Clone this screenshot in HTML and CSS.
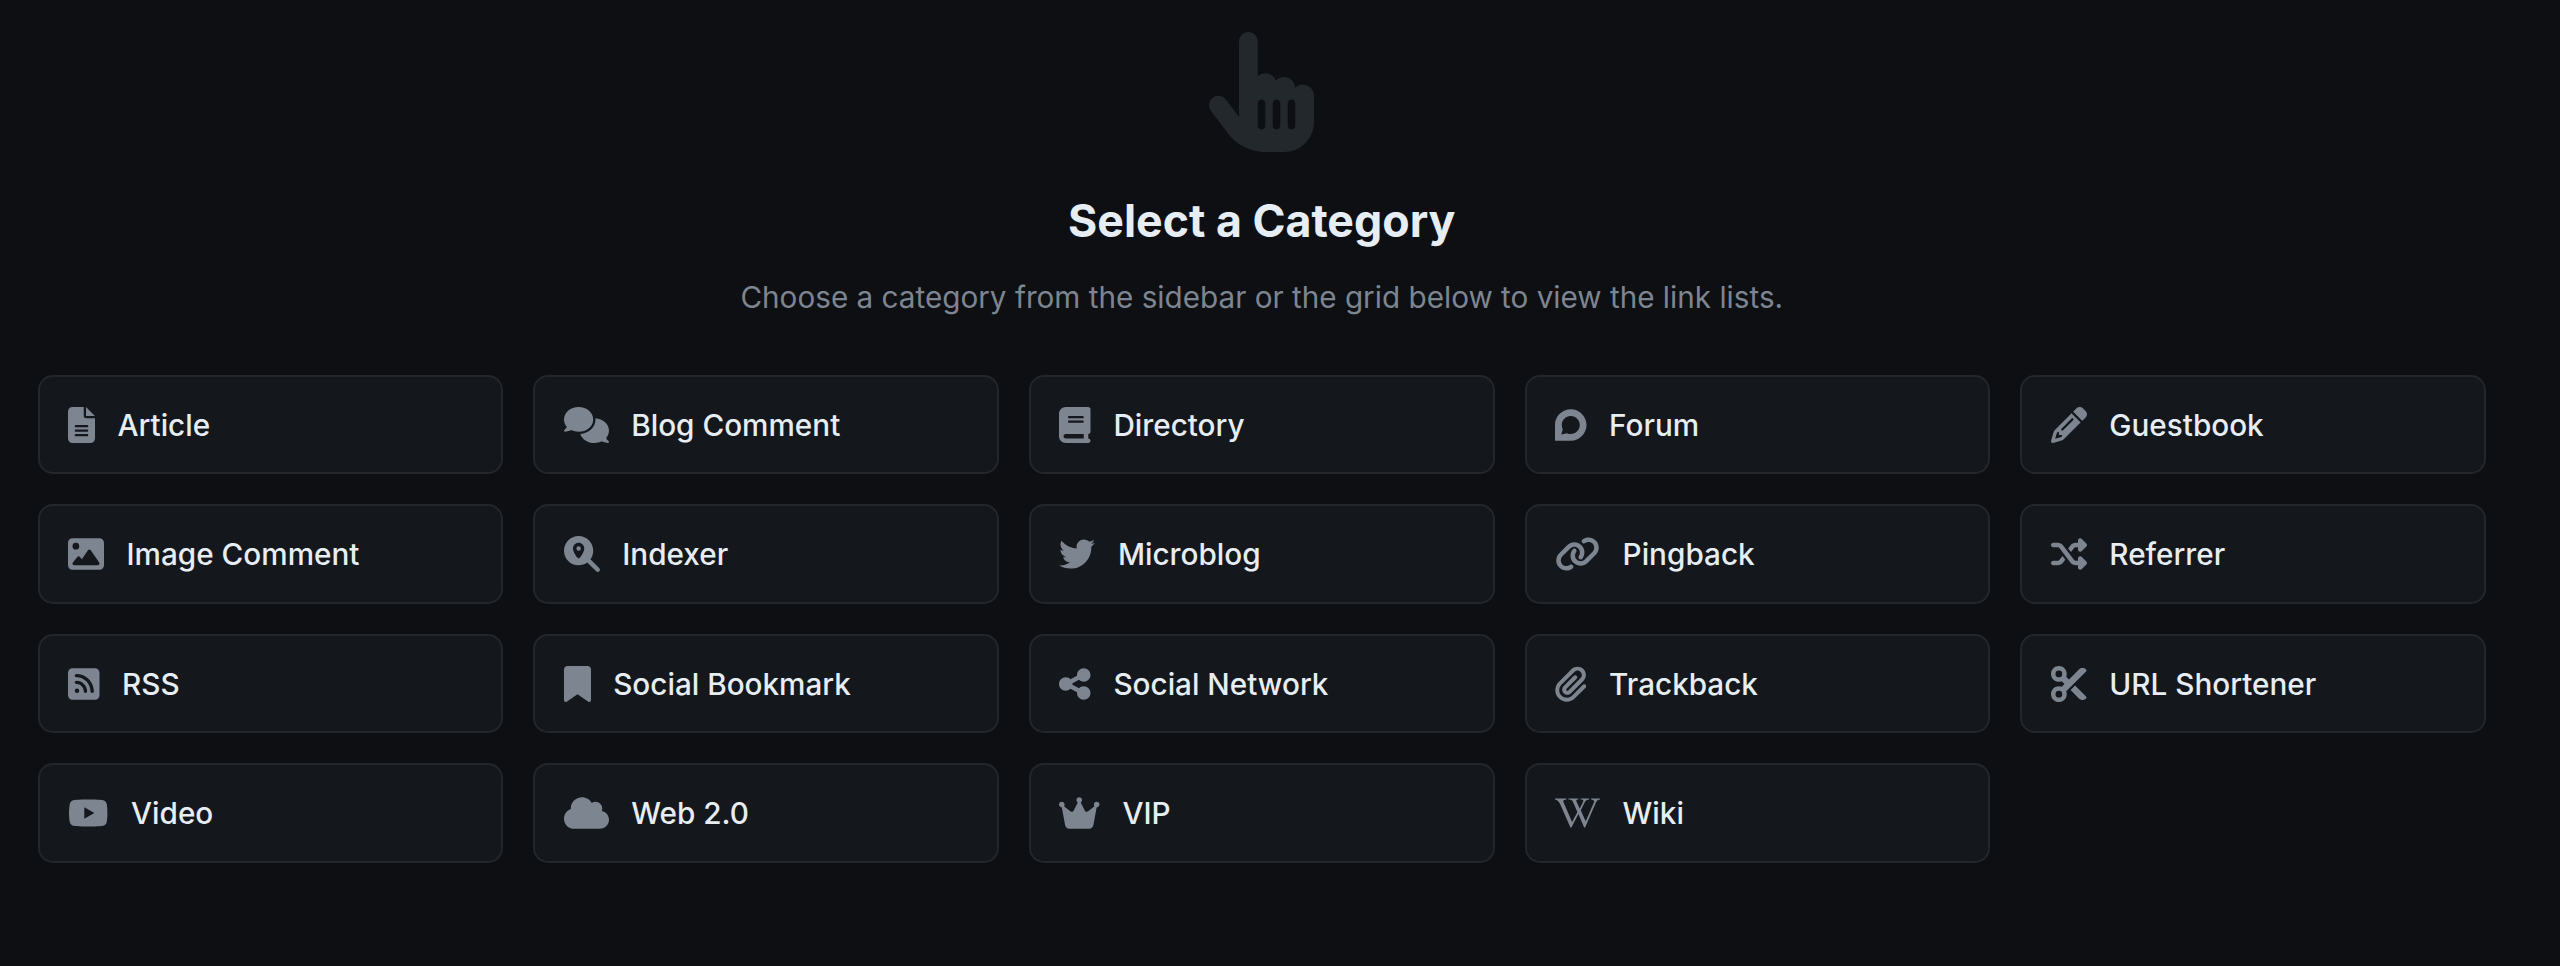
FILE: index.html
```html
<!DOCTYPE html>
<html lang="en">
<head>
<meta charset="utf-8">
<title>Select a Category</title>
<link rel="stylesheet" href="styles.css">
</head>
<body>
<main class="page">
  <section class="intro">
    <svg class="hand" viewBox="0 0 448 512"><path d="M128 40c0-22.1 17.9-40 40-40s40 17.900 40 40V188.200c8.500-7.600 19.700-12.200 32-12.200c20.600 0 38.200 13 45 31.200c8.800-9.300 21.200-15.200 35-15.200c25.300 0 46 19.500 47.900 44.300c8.500-7.700 19.800-12.300 32.100-12.300c26.500 0 48 21.500 48 48v48 16 48c0 70.700-57.300 128-128 128l-16 0H240l-.1 0h-5.200c-5 0-9.900-.3-14.700-1c-55.300-5.600-106.200-34-140-79L8 336c-13.300-17.700-9.700-42.700 8-56s42.700-9.700 56 8l56 74.700V40zM240 304c0-8.800-7.200-16-16-16s-16 7.200-16 16v96c0 8.800 7.200 16 16 16s16-7.200 16-16V304zm48-16c-8.800 0-16 7.200-16 16v96c0 8.800 7.200 16 16 16s16-7.200 16-16V304c0-8.800-7.200-16-16-16zm80 16c0-8.800-7.200-16-16-16s-16 7.200-16 16v96c0 8.800 7.200 16 16 16s16-7.200 16-16V304z"/></svg>
    <h1 class="title">Select a Category</h1>
    <p class="subtitle">Choose a category from the sidebar or the grid below to view the link lists.</p>
  </section>
  <section class="grid">
    <a class="card"><svg class="icon" viewBox="0 0 384 512"><path d="M64 0C28.700 0 0 28.700 0 64V448c0 35.300 28.700 64 64 64H320c35.300 0 64-28.700 64-64V160H256c-17.700 0-32-14.300-32-32V0H64zM256 0V128H384L256 0zM112 256H272c8.800 0 16 7.200 16 16s-7.200 16-16 16H112c-8.800 0-16-7.200-16-16s7.200-16 16-16zm0 64H272c8.800 0 16 7.200 16 16s-7.200 16-16 16H112c-8.800 0-16-7.200-16-16s7.200-16 16-16zm0 64H272c8.800 0 16 7.200 16 16s-7.200 16-16 16H112c-8.800 0-16-7.200-16-16s7.200-16 16-16z"/></svg><span>Article</span></a>
    <a class="card"><svg class="icon" viewBox="0 0 640 512"><path d="M208 352c114.900 0 208-78.800 208-176S322.900 0 208 0S0 78.800 0 176c0 38.600 14.700 74.300 39.600 103.400c-3.500 9.400-8.700 17.700-14.200 24.700c-4.800 6.200-9.700 11-13.300 14.300c-1.800 1.600-3.300 2.900-4.300 3.700c-.5 .4-.9 .7-1.100 .8l-.2 .2 0 0 0 0C1 327.200-1.400 334.400 .8 340.900S9.100 352 16 352c21.800 0 43.800-5.600 62.100-12.500c9.200-3.500 17.800-7.400 25.300-11.400C134.100 343.300 169.800 352 208 352zM448 176c0 112.300-99.100 196.900-216.500 207C255.800 457.400 336.400 512 432 512c38.200 0 73.900-8.700 104.700-23.900c7.500 4 16 7.900 25.200 11.400c18.300 6.900 40.300 12.500 62.100 12.500c6.900 0 13.100-4.500 15.200-11.100c2.100-6.600-.2-13.800-5.800-17.900l0 0 0 0-.2-.2c-.2-.2-.6-.4-1.100-.8c-1-.8-2.500-2-4.300-3.700c-3.600-3.300-8.500-8.100-13.300-14.300c-5.500-7-10.700-15.400-14.200-24.700c24.900-29 39.600-64.700 39.600-103.400c0-92.800-84.900-168.900-192.600-175.500c.4 5.100 .6 10.300 .6 15.500z"/></svg><span>Blog Comment</span></a>
    <a class="card"><svg class="icon" viewBox="0 0 448 512"><path d="M96 0C43 0 0 43 0 96V416c0 53 43 96 96 96H384h32c17.700 0 32-14.300 32-32s-14.300-32-32-32V384c17.700 0 32-14.300 32-32V32c0-17.700-14.300-32-32-32H384 96zm0 384H352v64H96c-17.700 0-32-14.300-32-32s14.300-32 32-32zm32-240c0-8.800 7.200-16 16-16H336c8.800 0 16 7.200 16 16s-7.200 16-16 16H144c-8.800 0-16-7.200-16-16zm16 48H336c8.800 0 16 7.200 16 16s-7.200 16-16 16H144c-8.800 0-16-7.200-16-16s7.200-16 16-16z"/></svg><span>Directory</span></a>
    <a class="card"><svg class="icon" viewBox="0 0 448 512"><path d="M225.900 32C103.300 32 0 130.500 0 252.100 0 256 .1 480 .1 480l225.800-.2c122.700 0 222.100-102.300 222.100-223.900C448 134.300 348.600 32 225.900 32zM224 384c-19.400 0-37.900-4.300-54.400-12.100L88.500 392l22.900-75c-9.800-18.100-15.400-38.900-15.400-61 0-70.700 57.300-128 128-128s128 57.300 128 128-57.300 128-128 128z"/></svg><span>Forum</span></a>
    <a class="card"><svg class="icon" viewBox="0 0 512 512"><path d="M410.300 231l11.300-11.300-33.900-33.900-62.100-62.100L291.700 89.800l-11.300 11.300-22.600 22.600L58.600 322.900c-10.400 10.400-18 23.300-22.200 37.400L1 480.700c-2.500 8.400-.2 17.500 6.100 23.700s15.300 8.500 23.700 6.100l120.300-35.400c14.100-4.200 27-11.800 37.400-22.200L387.700 253.700 410.300 231zM160 399.400l-9.100 22.700c-4 3.100-8.500 5.400-13.300 6.900L59.400 452l23-78.100c1.400-4.900 3.800-9.400 6.900-13.300l22.700-9.100v32c0 8.800 7.200 16 16 16h32zM362.700 18.700L348.300 33.200 325.700 55.800 314.300 67.100l33.900 33.900 62.100 62.100 33.900 33.900 11.300-11.300 22.600-22.600 14.500-14.500c25-25 25-65.500 0-90.500L453.300 18.700c-25-25-65.500-25-90.500 0zm-47.400 168l-144 144c-6.200 6.200-16.400 6.200-22.600 0s-6.200-16.400 0-22.600l144-144c6.200-6.200 16.400-6.200 22.600 0s6.200 16.400 0 22.600z"/></svg><span>Guestbook</span></a>
    <a class="card"><svg class="icon" viewBox="0 0 512 512"><path d="M0 96C0 60.700 28.700 32 64 32H448c35.300 0 64 28.700 64 64V416c0 35.300-28.700 64-64 64H64c-35.300 0-64-28.700-64-64V96zM323.800 202.500c-4.500-6.600-11.900-10.500-19.800-10.500s-15.400 3.900-19.800 10.500l-87 127.600L170.700 297c-4.600-5.700-11.500-9-18.700-9s-14.200 3.300-18.700 9l-64 80c-5.800 7.200-6.900 17.100-2.900 25.400s12.400 13.600 21.600 13.600h96 32H424c8.900 0 17.100-4.900 21.200-12.800s3.600-17.400-1.400-24.700l-120-176zM112 192a48 48 0 1 0 0-96 48 48 0 1 0 0 96z"/></svg><span>Image Comment</span></a>
    <a class="card"><svg class="icon" viewBox="0 0 512 512"><path d="M416 208c0 45.900-14.900 88.300-40 122.700L502.600 457.400c12.500 12.500 12.500 32.800 0 45.300s-32.800 12.500-45.300 0L330.700 376c-34.400 25.200-76.800 40-122.700 40C93.100 416 0 322.900 0 208S93.100 0 208 0S416 93.100 416 208zM288 176c0-44.200-35.800-80-80-80s-80 35.800-80 80c0 48.800 46.500 111.600 68.600 138.600c6 7.300 16.800 7.300 22.700 0c22.100-27 68.600-89.800 68.600-138.600zm-112 0a32 32 0 1 1 64 0 32 32 0 1 1 -64 0z"/></svg><span>Indexer</span></a>
    <a class="card"><svg class="icon" viewBox="0 0 512 512"><path d="M459.370 151.716c.325 4.548.325 9.097.325 13.645 0 138.720-105.583 298.558-298.558 298.558-59.452 0-114.680-17.219-161.137-47.106 8.447.974 16.568 1.299 25.340 1.299 49.055 0 94.213-16.568 130.274-44.832-46.132-.975-84.792-31.188-98.112-72.772 6.498.974 12.995 1.624 19.818 1.624 9.421 0 18.843-1.300 27.614-3.573-48.081-9.747-84.143-51.980-84.143-102.985v-1.299c13.969 7.797 30.214 12.670 47.431 13.319-28.264-18.843-46.781-51.005-46.781-87.391 0-19.492 5.197-37.360 14.294-52.954 51.655 63.675 129.300 105.258 216.365 109.807-1.624-7.797-2.599-15.918-2.599-24.040 0-57.828 46.782-104.934 104.934-104.934 30.213 0 57.502 12.670 76.670 33.137 23.715-4.548 46.456-13.320 66.599-25.340-7.798 24.366-24.366 44.833-46.132 57.827 21.117-2.273 41.584-8.122 60.426-16.243-14.292 20.791-32.161 39.308-52.628 54.253z"/></svg><span>Microblog</span></a>
    <a class="card"><svg class="icon" viewBox="0 0 640 512"><path d="M579.800 267.700c56.500-56.500 56.500-148 0-204.500c-50-50-128.800-56.500-186.300-15.400l-1.600 1.100c-14.400 10.300-17.700 30.300-7.400 44.600s30.300 17.700 44.600 7.400l1.600-1.100c32.100-22.900 76-19.300 103.800 8.600c31.500 31.500 31.500 82.500 0 114L422.300 334.800c-31.500 31.500-82.500 31.500-114 0c-27.900-27.900-31.500-71.800-8.600-103.800l1.100-1.600c10.300-14.400 6.900-34.400-7.400-44.600s-34.400-6.900-44.600 7.400l-1.100 1.600C206.500 251.200 213 330 263 380c56.500 56.500 148 56.500 204.500 0L579.800 267.700zM60.200 244.300c-56.500 56.500-56.500 148 0 204.500c50 50 128.800 56.500 186.300 15.400l1.600-1.100c14.400-10.300 17.700-30.300 7.400-44.600s-30.300-17.700-44.600-7.400l-1.600 1.100c-32.100 22.900-76 19.300-103.800-8.600C74 372 74 321 105.500 289.500L217.700 177.200c31.500-31.500 82.500-31.500 114 0c27.900 27.900 31.500 71.800 8.600 103.900l-1.100 1.600c-10.300 14.400-6.900 34.400 7.400 44.600s34.400 6.900 44.600-7.400l1.100-1.600C433.500 260.800 427 182 377 132c-56.500-56.500-148-56.500-204.500 0L60.200 244.300z"/></svg><span>Pingback</span></a>
    <a class="card"><svg class="icon" viewBox="0 0 512 512"><path d="M403.800 34.400c12-5 25.700-2.200 34.900 6.900l64 64c6 6 9.400 14.100 9.400 22.600s-3.400 16.600-9.400 22.600l-64 64c-9.200 9.200-22.900 11.900-34.900 6.900s-19.800-16.600-19.800-29.600V160H352c-10.100 0-19.600 4.700-25.600 12.800L284 229.300 244 176l31.200-41.600C293.300 110.200 321.800 96 352 96h32V64c0-12.900 7.800-24.600 19.800-29.600zM164 282.700L204 336l-31.200 41.600C154.700 401.800 126.200 416 96 416H32c-17.700 0-32-14.300-32-32s14.300-32 32-32H96c10.100 0 19.600-4.700 25.600-12.800L164 282.700zm274.600 188c-9.200 9.200-22.900 11.900-34.900 6.900s-19.800-16.600-19.800-29.600V416H352c-30.200 0-58.700-14.200-76.800-38.400L121.600 172.800c-6-8.100-15.500-12.800-25.600-12.800H32c-17.700 0-32-14.300-32-32s14.300-32 32-32H96c30.200 0 58.700 14.200 76.800 38.400L326.400 339.200c6 8.100 15.500 12.800 25.600 12.800h32V320c0-12.900 7.800-24.600 19.800-29.600s25.700-2.200 34.900 6.900l64 64c6 6 9.400 14.100 9.400 22.600s-3.400 16.600-9.400 22.600l-64 64z"/></svg><span>Referrer</span></a>
    <a class="card"><svg class="icon" viewBox="0 0 448 512"><path d="M64 32C28.700 32 0 60.700 0 96V416c0 35.300 28.700 64 64 64H384c35.300 0 64-28.700 64-64V96c0-35.300-28.700-64-64-64H64zM96 136c0-13.300 10.700-24 24-24c137 0 248 111 248 248c0 13.300-10.700 24-24 24s-24-10.700-24-24c0-110.500-89.500-200-200-200c-13.300 0-24-10.700-24-24zm0 96c0-13.300 10.700-24 24-24c83.900 0 152 68.100 152 152c0 13.300-10.700 24-24 24s-24-10.700-24-24c0-57.400-46.600-104-104-104c-13.300 0-24-10.700-24-24zm0 120a32 32 0 1 1 64 0 32 32 0 1 1 -64 0z"/></svg><span>RSS</span></a>
    <a class="card"><svg class="icon" viewBox="0 0 384 512"><path d="M0 48V487.700C0 501.100 10.900 512 24.300 512c5 0 9.900-1.500 14-4.400L192 400 345.700 507.600c4.100 2.900 9 4.400 14 4.400c13.400 0 24.300-10.900 24.300-24.300V48c0-26.500-21.500-48-48-48H48C21.500 0 0 21.500 0 48z"/></svg><span>Social Bookmark</span></a>
    <a class="card"><svg class="icon" viewBox="0 0 448 512"><path d="M352 224c53 0 96-43 96-96s-43-96-96-96s-96 43-96 96c0 4 .2 8 .7 11.900l-94.100 47C145.400 170.200 121.900 160 96 160c-53 0-96 43-96 96s43 96 96 96c25.900 0 49.400-10.200 66.600-26.900l94.100 47c-.5 3.900-.7 7.800-.7 11.900c0 53 43 96 96 96s96-43 96-96s-43-96-96-96c-25.900 0-49.400 10.200-66.600 26.900l-94.100-47c.5-3.900 .7-7.800 .7-11.900s-.2-8-.7-11.900l94.100-47C302.600 213.800 326.100 224 352 224z"/></svg><span>Social Network</span></a>
    <a class="card"><svg class="icon" viewBox="0 0 448 512"><path d="M364.200 83.800c-24.400-24.400-64-24.400-88.400 0l-184 184c-42.100 42.100-42.100 110.300 0 152.400s110.300 42.100 152.400 0l152-152c10.900-10.900 28.700-10.900 39.600 0s10.900 28.700 0 39.600l-152 152c-64 64-167.600 64-231.600 0s-64-167.600 0-231.600l184-184c46.300-46.300 121.300-46.300 167.600 0s46.300 121.300 0 167.600l-176 176c-28.600 28.600-75 28.600-103.600 0s-28.600-75 0-103.600l144-144c10.900-10.900 28.700-10.900 39.600 0s10.900 28.700 0 39.600l-144 144c-6.700 6.700-6.700 17.700 0 24.400s17.700 6.700 24.400 0l176-176c24.400-24.400 24.400-64 0-88.400z"/></svg><span>Trackback</span></a>
    <a class="card"><svg class="icon" viewBox="0 0 512 512"><path d="M256 192l-39.500-39.500c4.900-12.600 7.500-26.200 7.500-40.500C224 50.100 173.900 0 112 0S0 50.100 0 112s50.100 112 112 112c14.300 0 27.900-2.700 40.500-7.500L192 256l-39.500 39.500c-12.600-4.900-26.200-7.500-40.500-7.500C50.100 288 0 338.100 0 400s50.100 112 112 112s112-50.100 112-112c0-14.300-2.700-27.900-7.500-40.500L499.200 76.800c7.100-7.100 7.100-18.500 0-25.600c-28.300-28.300-74.100-28.300-102.400 0L256 192zm22.600 150.600L396.800 460.800c28.300 28.300 74.100 28.300 102.400 0c7.100-7.100 7.100-18.500 0-25.600L342.600 278.600l-64 64zM64 112a48 48 0 1 1 96 0 48 48 0 1 1 -96 0zm48 240a48 48 0 1 1 0 96 48 48 0 1 1 0-96z"/></svg><span>URL Shortener</span></a>
    <a class="card"><svg class="icon" viewBox="0 0 576 512"><path d="M549.655 124.083c-6.281-23.650-24.787-42.276-48.284-48.597C458.781 64 288 64 288 64S117.220 64 74.629 75.486c-23.497 6.322-42.003 24.947-48.284 48.597-11.412 42.867-11.412 132.305-11.412 132.305s0 89.438 11.412 132.305c6.281 23.650 24.787 41.500 48.284 47.821C117.220 448 288 448 288 448s170.780 0 213.371-11.486c23.497-6.321 42.003-24.171 48.284-47.821 11.412-42.867 11.412-132.305 11.412-132.305s0-89.438-11.412-132.305zm-317.510 213.508V175.185l142.739 81.205-142.739 81.201z"/></svg><span>Video</span></a>
    <a class="card"><svg class="icon" viewBox="0 0 640 512"><path d="M0 336c0 79.500 64.500 144 144 144H512c70.700 0 128-57.300 128-128c0-61.900-44-113.600-102.400-125.400c4.100-10.700 6.400-22.400 6.400-34.600c0-53-43-96-96-96c-19.700 0-38.100 6-53.300 16.200C367 64.200 315.300 32 256 32C167.600 32 96 103.600 96 192c0 2.700 .1 5.400 .2 8.100C40.200 219.800 0 273.200 0 336z"/></svg><span>Web 2.0</span></a>
    <a class="card"><svg class="icon" viewBox="0 0 576 512"><path d="M309 106c11.400-7 19-19.700 19-34c0-22.100-17.900-40-40-40s-40 17.900-40 40c0 14.400 7.600 27 19 34L209.700 220.600c-9.100 18.200-32.700 23.400-48.600 10.700L72 160c5-6.700 8-15 8-24c0-22.100-17.900-40-40-40S0 113.900 0 136s17.900 40 40 40c.2 0 .5 0 .7 0L86.400 427.400c5.500 30.400 32 52.600 63 52.600H426.600c30.900 0 57.400-22.100 63-52.600L535.300 176c.2 0 .5 0 .7 0c22.100 0 40-17.900 40-40s-17.900-40-40-40s-40 17.900-40 40c0 9 3 17.300 8 24l-89.100 71.300c-15.900 12.700-39.500 7.500-48.600-10.700L309 106z"/></svg><span>VIP</span></a>
    <a class="card"><svg class="icon" viewBox="0 0 640 512"><path d="M640 51.200l-.3 12.200c-28.100.8-45 15.800-55.800 40.300-25 57.800-103.300 240-155.300 358.600H415l-81.900-193.100c-32.500 63.600-68.300 130-99.200 193.100-.3.3-15 0-15-.3C172 352.300 122.800 243.400 75.800 133.400 64.400 106.700 26.400 63.400.2 63.700c0-3.100-.3-10-.3-14.200h161.900v13.900c-19.200 1.100-52.800 13.300-43.300 34.200 21.900 49.700 103.600 240.300 125.600 288.600 15-29.700 57.800-109.200 75.300-142.800-13.900-28.300-58.600-133.900-72.800-160-9.700-17.800-36.100-19.400-55.800-19.700V49.800l142.500.3v13.100c-19.400.6-38.100 7.800-29.400 26.100 18.900 40 30.600 68.100 48.100 104.700 5.600-10.800 34.700-69.400 48.100-100.800 8.900-20.600-3.900-28.600-38.600-29.400.3-3.600 0-10.300.3-13.600 44.400-.3 111.100-.3 123.100-.6v13.600c-22.500.8-45.800 12.800-58.100 31.700l-59.200 122.800c6.400 16.100 63.300 142.800 69.200 156.700L559.200 91.800c-8.600-23.100-36.400-28.100-47.200-28.300V49.600l127.800 1.100.2.500z"/></svg><span>Wiki</span></a>
  </section>
</main>
</body>
</html>
```

FILE: styles.css
```css
* { box-sizing: border-box; }
html, body { margin: 0; height: 100%; }
body {
  background: #0d0f13;
  color: #e6edf3;
  font-family: Inter, "Liberation Sans", sans-serif;
  overflow: hidden;
}
.page { padding: 31.5px 74px 0 37.5px; }
.intro {
  display: flex;
  flex-direction: column;
  align-items: center;
  margin-bottom: 54.5px;
}
.hand { width: 105px; height: 120px; fill: #22282c; display: block; margin-bottom: 42.75px; }
.title {
  margin: 0 0 27px;
  font-size: 44.7px;
  line-height: 54px;
  font-weight: 700;
  color: #e6edf3;
}
.subtitle {
  margin: 0;
  font-size: 29.7px;
  line-height: 45px;
  font-weight: 400;
  color: #7d8590;
}
.grid {
  display: grid;
  grid-template-columns: repeat(5, 1fr);
  gap: 30px;
}
.card {
  display: flex;
  align-items: center;
  gap: 22.5px;
  height: 99.5px;
  padding: 0 28.5px;
  background: #14171c;
  border: 2px solid #23272c;
  border-radius: 15px;
  font-size: 29.7px;
  font-weight: 500;
  color: #e6edf3;
}
.icon { height: 36px; width: auto; flex: none; fill: #7d8590; }
```
